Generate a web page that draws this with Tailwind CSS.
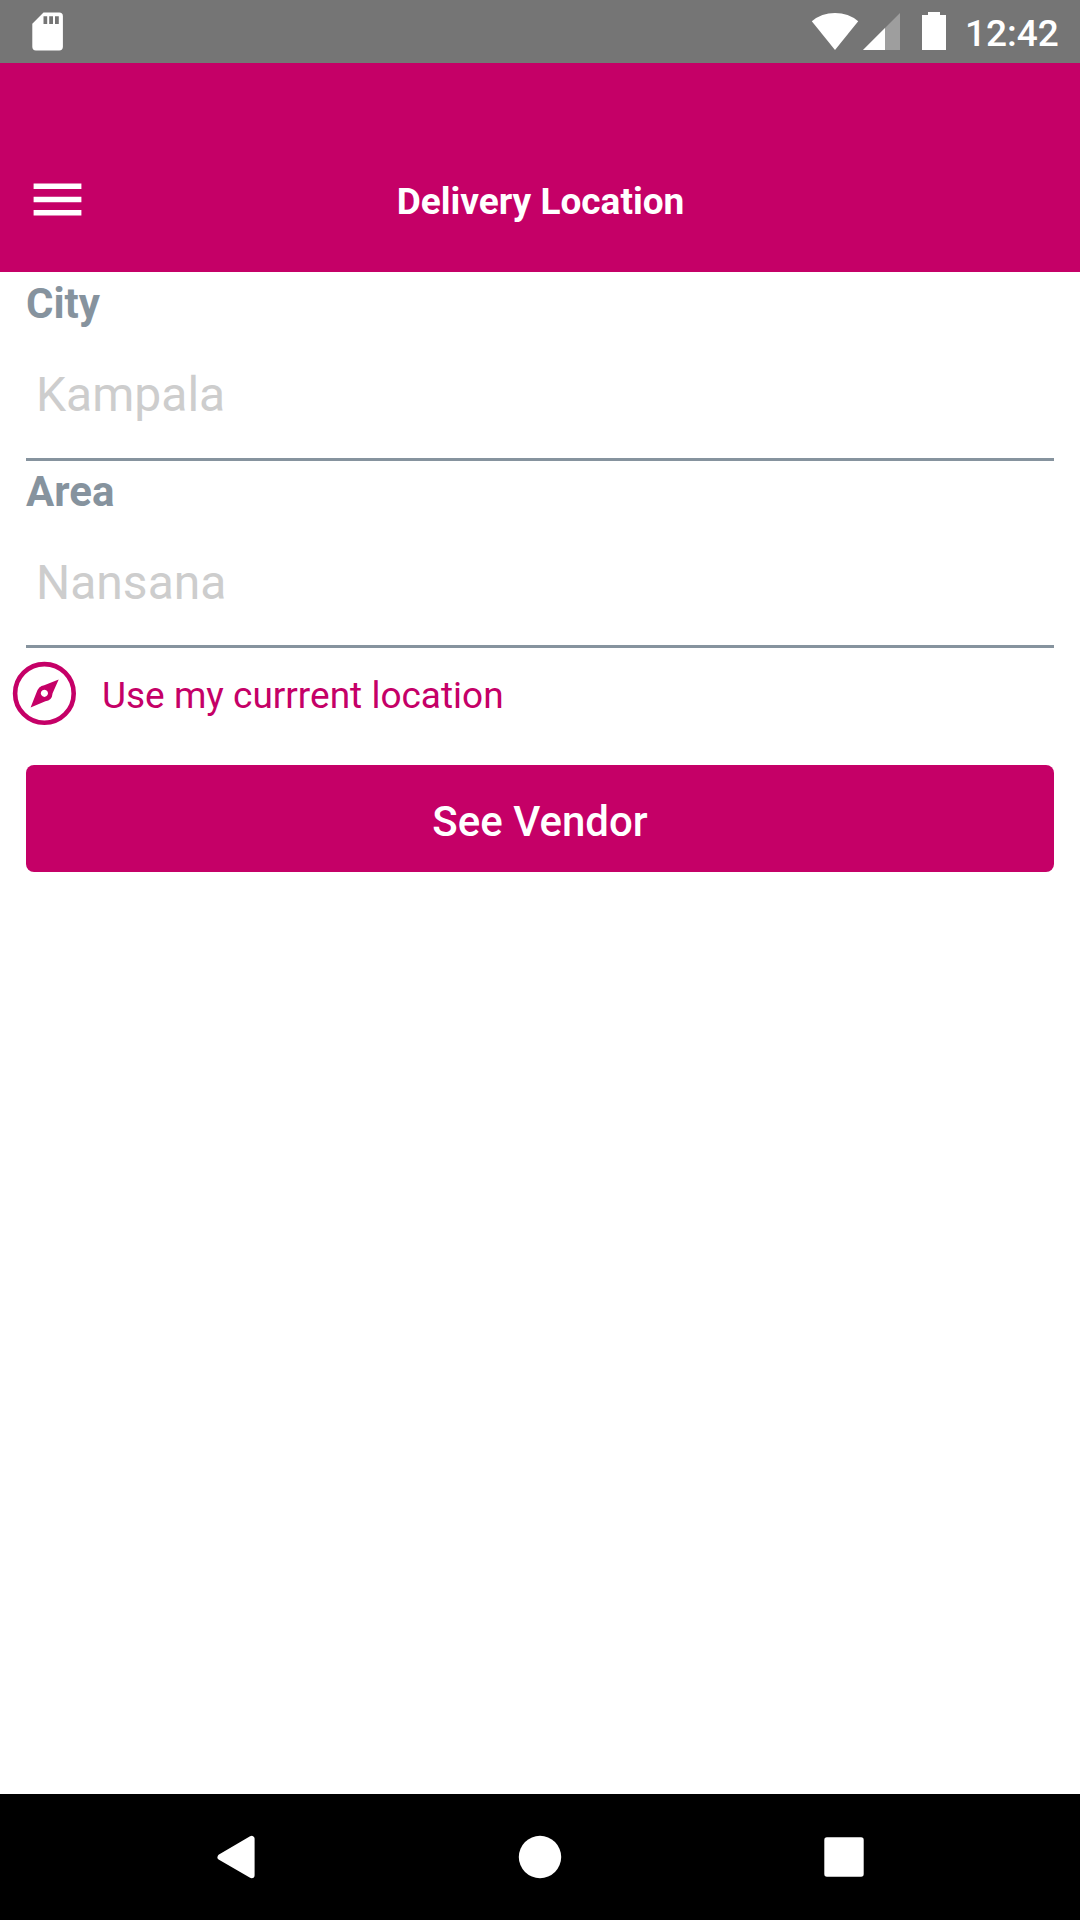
<!DOCTYPE html>
<html lang="en">
<head>
<meta charset="utf-8">
<title>Delivery Location</title>
<script src="https://cdn.jsdelivr.net/npm/@tailwindcss/browser@4"></script>
</head>
<body class="w-[1080px] h-[1920px] flex flex-col bg-white overflow-hidden font-['Roboto',sans-serif]">
  <div class="h-[63px] shrink-0 bg-[#757575] flex items-start">
    <svg class="ml-8 w-8 h-[63px]" viewBox="32 0 32 63"><path fill="#fff" fill-rule="evenodd" d="M43.5 12.6H59.2A3.7 3.7 0 0 1 62.9 16.3V46.8A3.7 3.7 0 0 1 59.2 50.5H36A3.7 3.7 0 0 1 32.3 46.8V23.8ZM43.5 16.3V24H47.2V16.3ZM49.2 16.3V24H53V16.3ZM55 16.3V24H58.8V16.3Z"/></svg>
    <div class="grow"></div>
    <svg class="w-[140px] h-[63px]" viewBox="810 0 140 63">
      <path fill="#fff" d="M835 50 811.8 21.2Q821.5 13 835 13T858.2 21.2Z"/>
      <path fill="#9e9e9e" d="M900 13V50H863Z"/>
      <path fill="#fff" d="M885 28V50H863Z"/>
      <path fill="#fff" d="M928 12H940V15H946V50H922V15H928Z"/>
    </svg>
    <span class="w-[115px] ml-[15px] h-[63px] leading-[68px] text-[37px] font-medium text-white">12:42</span>
  </div>
  <header class="h-[209px] shrink-0 bg-[#c50067] flex items-end">
    <div class="w-full h-[142px] grid grid-cols-[120px_1fr_120px] items-center">
      <svg class="w-[120px] h-[142px]" viewBox="0 130 120 142"><path fill="#fff" d="M33.6 183.6h47.8v5.4h-47.8zM33.6 196.8h47.8v5.4h-47.8zM33.6 210h47.8v5.4h-47.8z"/></svg>
      <h1 class="pt-[2px] pl-px text-center text-[37px] leading-[44px] font-bold text-white">Delivery Location</h1>
    </div>
  </header>
  <main class="grow px-[26px] flex flex-col">
    <label class="h-[63px] leading-[63px] text-[42px] font-bold text-[#86939e]">City</label>
    <div class="h-[126px] pl-[10px] border-b-3 border-[#86939e] text-[48px] leading-[120px] text-[#cdcdcd]">Kampala</div>
    <label class="h-[61px] leading-[61px] text-[42px] font-bold text-[#86939e]">Area</label>
    <div class="h-[126px] pl-[10px] border-b-3 border-[#86939e] text-[48px] leading-[122px] text-[#cdcdcd]">Nansana</div>
    <div class="h-[117px] -ml-[26px] flex items-start text-[#c50067]">
      <svg class="w-[102px] h-[94px]" viewBox="0 648 102 94">
        <circle cx="44.4" cy="693.4" r="29.3" fill="none" stroke="currentColor" stroke-width="4.6"/>
        <path fill="currentColor" fill-rule="evenodd" d="M58.7 679.4 52.6 693.3Q52 700.8 45.4 701.2L30.6 707.4 36.2 693.3Q38.5 685.6 44.2 685.2ZM44.4 689.7a3.6 3.6 0 1 0 .01 0Z"/>
      </svg>
      <span class="h-[96px] leading-[96px] text-[37px]">Use my currrent location</span>
    </div>
    <button class="h-[107px] rounded-[8px] bg-[#c50067] text-white text-[42px] leading-[48px] font-medium pt-[6px]">See Vendor</button>
  </main>
  <nav class="h-[126px] shrink-0 bg-black">
    <svg class="w-[1080px] h-[126px]" viewBox="0 1794 1080 126" fill="#fff">
      <path stroke="#fff" stroke-width="6" stroke-linejoin="round" d="M220.5 1857.2 251.6 1838.8V1875.2Z"/>
      <circle cx="540" cy="1857" r="21.2"/>
      <rect x="824.3" y="1837.3" width="39.4" height="39.4" rx="2.6"/>
    </svg>
  </nav>
</body>
</html>
